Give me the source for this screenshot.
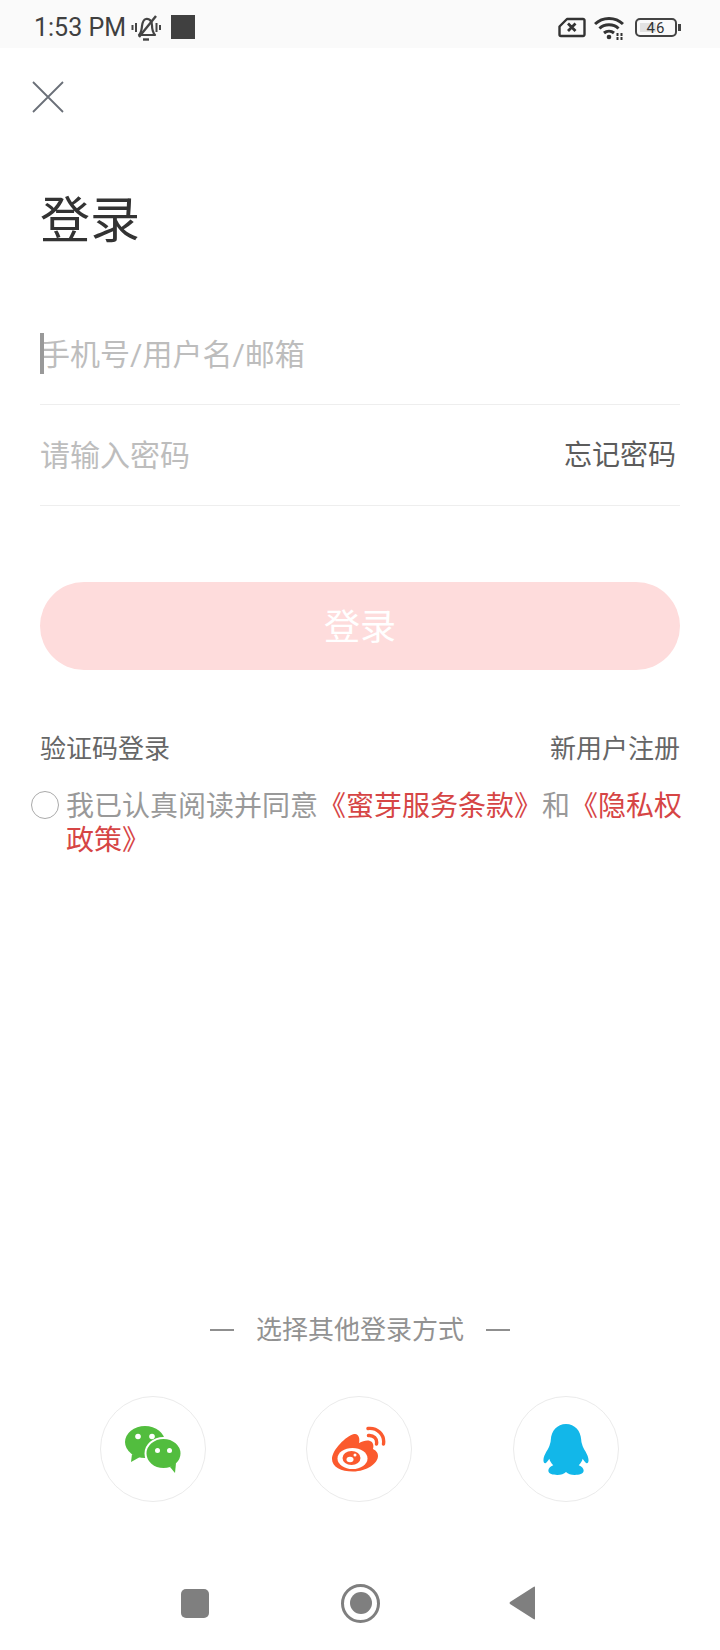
<div class="page">
  <header class="status">
    <div class="status-left">
      <span class="time">1:53 PM</span>
      <svg class="bell" width="30" height="26" viewBox="0 0 30 26" fill="none" stroke="#444">
        <path d="M8 20c2.500-2.500 2.500-5 3-9 .5-4 2-6.500 4-7 3.500-.5 6 2 6 6.500 0 4 .5 6.500 3 9.500z" stroke-width="2.200" stroke-linejoin="round"/>
        <path d="M25 1 L8 22" stroke-width="2.400"/>
        <path d="M12 24.500h6" stroke-width="2.400"/>
        <path d="M5 8v9M1.500 10v5M25.500 8v9M29 10v5" stroke-width="2"/>
      </svg>
      <span class="square"></span>
    </div>
    <div class="status-right">
      <svg width="28" height="21" viewBox="0 0 28 21" fill="none">
        <path d="M9 2h16a1.500 1.500 0 0 1 1.500 1.500v14a1.500 1.500 0 0 1-1.500 1.500H3a1.500 1.500 0 0 1-1.500-1.500V9.500z" stroke="#333" stroke-width="2.400" stroke-linejoin="round"/>
        <path d="M10 6.500l7.500 7.500M17.500 6.500L10 14" stroke="#333" stroke-width="2.800"/>
      </svg>
      <svg class="wifi" width="30" height="24" viewBox="0 0 30 24" fill="none" stroke="#333">
        <path d="M1 8C8.500 .5 21.500 .5 29 8" stroke-width="3"/>
        <path d="M5.500 12.500c5-5 14-5 19 0" stroke-width="3"/>
        <path d="M10 17c3-2.500 7-2.500 10 0" stroke-width="3"/>
        <circle cx="15" cy="21" r="2.300" fill="#333" stroke="none"/>
        <path d="M23.500 17v7M27.500 17v7" stroke-width="2" stroke-dasharray="3 1"/>
      </svg>
      <div class="battery">
        <span class="level"></span>
        <span class="pct">46</span>
      </div>
      <span class="nub"></span>
    </div>
  </header>

  <main class="content">
    <button class="close" aria-label="关闭">
      <svg width="32" height="32" viewBox="0 0 32 32" stroke="#6a6f78" stroke-width="1.800" fill="none">
        <path d="M1 1l30 30M31 1L1 31"/>
      </svg>
    </button>

    <h1>登录</h1>

    <div class="field first">
      <span class="caret"></span>
      <span class="ph">手机号/用户名/邮箱</span>
    </div>
    <div class="field second">
      <span class="ph">请输入密码</span>
      <span class="forgot">忘记密码</span>
    </div>

    <button class="submit">登录</button>

    <div class="links">
      <span>验证码登录</span>
      <span>新用户注册</span>
    </div>

    <div class="agree">
      <span class="radio"></span>
      <p>我已认真阅读并同意<em>《蜜芽服务条款》</em>和<em>《隐私权政策》</em></p>
    </div>

    <div class="spacer"></div>

    <div class="other"><span class="dash"></span><span>选择其他登录方式</span><span class="dash"></span></div>

    <div class="socials">
      <div class="soc">
        <svg width="56" height="47" viewBox="0 0 56 47">
          <ellipse cx="20" cy="16" rx="20" ry="16" fill="#52bd3e"/>
          <path d="M7 28 L6 36 L15 31z" fill="#52bd3e"/>
          <ellipse cx="38.500" cy="27.500" rx="18" ry="15.500" fill="#52bd3e" stroke="#fff" stroke-width="2"/>
          <path d="M45 41 L50 47 L51 37z" fill="#52bd3e"/>
          <circle cx="13" cy="10.500" r="2.800" fill="#fff"/><circle cx="27" cy="10.500" r="2.800" fill="#fff"/>
          <circle cx="32.500" cy="24.500" r="2.500" fill="#fff"/><circle cx="44.500" cy="24.500" r="2.500" fill="#fff"/>
        </svg>
      </div>
      <div class="soc">
        <svg width="54" height="46" viewBox="0 0 54 46">
          <path fill="#fb5a2e" d="M22 8C14 10 0 24 0 33c0 8 9 12.500 21 12.500C35 45.500 46 37 46 30c0-4-3-6-5-7 1-4 0-7-3-8-3-1-7 0-11 2 1-4 0-10-5-9z"/>
          <ellipse cx="20.500" cy="32.500" rx="15" ry="10.500" fill="#fff"/>
          <ellipse cx="19.500" cy="32" rx="9" ry="7" fill="#fb5a2e"/>
          <ellipse cx="18" cy="33.500" rx="3.500" ry="2.800" fill="#fff"/>
          <circle cx="23" cy="29" r="1.500" fill="#fff"/>
          <path d="M36 2.500c9-1 17 6 15.500 15.500M36.500 9.500c5-.5 9 3 8 8.500" fill="none" stroke="#fb5a2e" stroke-width="3.400" stroke-linecap="round"/>
        </svg>
      </div>
      <div class="soc">
        <svg width="46" height="51" viewBox="1 1 46 52">
          <path fill="#12b7e9" d="M24 1c-9 0-15 7-15.500 16-.1 2-.6 3.500-1 5C7 26 1 32 1 38c0 2 1 3.500 2 3 1.500-.6 3-3 4-4.500 .5 2.500 2 4.500 4 6.500-3 1-5 3-5 5.500C6 52 11 53 15 53c4 0 7-1 9-3 2 2 5 3 9 3 4 0 9-1 9-4.500 0-2.500-2-4.500-5-5.500 2-2 3.500-4 4-6.500 1 1.500 2.500 3.900 4 4.500 1 .5 2-1 2-3 0-6-6-12-6.500-16-.4-1.500-.9-3-1-5C39 8 33 1 24 1z"/>
        </svg>
      </div>
    </div>
  </main>

  <nav class="navbar">
    <span class="recent"></span>
    <span class="home"><span></span></span>
    <svg width="28" height="34" viewBox="0 0 28 34"><path d="M26 1.500 L26 32.500 Q26 34 24.500 33 L1 18 Q0 17 1 16 L24.500 1 Q26 0 26 1.500z" fill="#7f7f7f"/></svg>
  </nav>
</div>

<style>
  :global(body) {
    margin: 0;
    background: #fff;
  }
  .page {
    width: 720px;
    height: 1650px;
    display: flex;
    flex-direction: column;
    overflow: hidden;
    font-family: "Roboto", "Noto Sans CJK SC", sans-serif;
    background: #fff;
    text-spacing-trim: space-all;
  }
  .status {
    height: 48px;
    background: #fafafa;
    display: flex;
    align-items: center;
    justify-content: space-between;
    padding: 7px 39px 0 34px;
    box-sizing: border-box;
    flex: none;
  }
  .status-left, .status-right {
    display: flex;
    align-items: center;
  }
  .time {
    font-size: 25px;
    color: #404040;
  }
  .bell { margin-left: 5px; }
  .square {
    width: 24px;
    height: 24px;
    background: #404040;
    margin: -1px 0 0 10px;
  }
  .wifi { margin-left: 8px; }
  .battery {
    position: relative;
    width: 38px;
    height: 15px;
    border: 2.200px solid #444;
    border-radius: 5px;
    margin-left: 11px;
    display: flex;
    align-items: center;
    justify-content: center;
  }
  .level {
    position: absolute;
    left: 3px;
    top: 3px;
    bottom: 3px;
    width: 16px;
    background: #e2e2e2;
  }
  .pct {
    position: relative;
    font-size: 15px;
    color: #333;
    letter-spacing: 1px;
  }
  .nub {
    width: 3px;
    height: 7px;
    background: #444;
    margin-left: 1px;
  }
  .content {
    flex: 1;
    display: flex;
    flex-direction: column;
    padding: 0 40px;
  }
  .close {
    all: unset;
    display: block;
    width: 32px;
    height: 32px;
    margin: 33px 0 0 -8px;
  }
  h1 {
    font-size: 50px;
    font-weight: 400;
    color: #333;
    margin: 0;
    line-height: 60px;
    margin-top: 78px;
  }
  .field {
    display: flex;
    align-items: center;
    border-bottom: 1px solid #eeeeee;
    position: relative;
    font-size: 30px;
    color: #bdbdbd;
    box-sizing: border-box;
  }
  .field.first {
    margin-top: 54px;
    height: 100px;
    padding-bottom: 6px;
  }
  .field.second {
    height: 101px;
    justify-content: space-between;
    padding-bottom: 4px;
  }
  .caret {
    position: absolute;
    left: 0;
    top: 28px;
    width: 4px;
    height: 41px;
    background: #999;
  }
  .forgot {
    color: #5c5c5c;
    font-size: 28px;
    margin-right: 4px;
  }
  .submit {
    all: unset;
    display: block;
    margin-top: 76px;
    height: 88px;
    border-radius: 44px;
    background: #fedcdc;
    color: #fff;
    font-size: 36px;
    text-align: center;
    line-height: 92px;
    flex: none;
  }
  .links {
    display: flex;
    justify-content: space-between;
    margin-top: 61px;
    font-size: 26px;
    line-height: 36px;
    color: #666;
  }
  .agree {
    display: flex;
    margin: 23px -6px 0 -8px;
  }
  .radio {
    flex: none;
    width: 26px;
    height: 26px;
    border: 1.500px solid #aaa;
    border-radius: 50%;
    margin: 1px 7px 0 -1px;
  }
  .agree p {
    margin: 0;
    font-size: 28px;
    line-height: 34px;
    color: #999;
  }
  .agree em {
    font-style: normal;
    color: #d64545;
  }
  .spacer { flex: 1; }
  .other {
    display: flex;
    justify-content: center;
    align-items: center;
    font-size: 26px;
    line-height: 36px;
    color: #929292;
    gap: 22px;
  }
  .dash {
    width: 24px;
    height: 1.500px;
    background: #8f8f8f;
  }
  .socials {
    display: flex;
    justify-content: center;
    gap: 100.5px;
    margin-top: 48px;
    margin-bottom: 70px;
    padding-right: 2px;
  }
  .soc {
    width: 106px;
    height: 106px;
    box-sizing: border-box;
    border: 1px solid #ebebeb;
    border-radius: 50%;
    display: flex;
    align-items: center;
    justify-content: center;
  }
  .navbar {
    height: 78px;
    flex: none;
    display: flex;
    align-items: center;
    padding: 0 0 16px 181px;
    box-sizing: border-box;
  }
  .recent {
    width: 28px;
    height: 29px;
    background: #7f7f7f;
    border-radius: 5px;
  }
  .home {
    width: 39px;
    height: 39px;
    border-radius: 50%;
    border: 3px solid #7f7f7f;
    box-sizing: border-box;
    margin-left: 132px;
    display: flex;
    align-items: center;
    justify-content: center;
  }
  .home span {
    width: 22px;
    height: 22px;
    border-radius: 50%;
    background: #7f7f7f;
  }
  .navbar svg { margin-left: 129px; }
</style>
